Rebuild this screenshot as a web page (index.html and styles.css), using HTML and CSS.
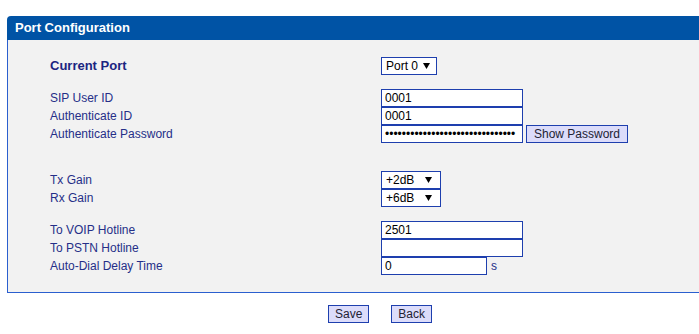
FILE: index.html
```html
<!DOCTYPE html>
<html>
<head>
<meta charset="utf-8">
<link rel="stylesheet" href="styles.css">
</head>
<body>
<div class="page">
  <div class="panel">
    <div class="panel-head">Port Configuration</div>
    <div class="panel-body">
      <div class="group">
        <div class="label strong">Current Port</div>
        <div class="ctrl">
          <select class="sel sel-port"><option>Port 0</option></select>
        </div>
      </div>
      <div class="group">
        <div class="label">SIP User ID</div>
        <div class="ctrl"><input class="txt" type="text" value="0001"></div>
        <div class="label">Authenticate ID</div>
        <div class="ctrl"><input class="txt" type="text" value="0001"></div>
        <div class="label">Authenticate Password</div>
        <div class="ctrl">
          <input class="txt" type="password" value="aaaaaaaaaaaaaaaaaaaaaaaaaaaaaaa">
          <button class="btn">Show Password</button>
        </div>
      </div>
      <div class="group group-wide">
        <div class="label">Tx Gain</div>
        <div class="ctrl"><select class="sel sel-gain"><option>+2dB</option></select></div>
        <div class="label">Rx Gain</div>
        <div class="ctrl"><select class="sel sel-gain"><option>+6dB</option></select></div>
      </div>
      <div class="group">
        <div class="label">To VOIP Hotline</div>
        <div class="ctrl"><input class="txt" type="text" value="2501"></div>
        <div class="label">To PSTN Hotline</div>
        <div class="ctrl"><input class="txt" type="text" value=""></div>
        <div class="label">Auto-Dial Delay Time</div>
        <div class="ctrl">
          <input class="txt txt-short" type="text" value="0">
          <span class="unit">s</span>
        </div>
      </div>
    </div>
  </div>
  <div class="actions">
    <button class="btn">Save</button>
    <button class="btn">Back</button>
  </div>
</div>
</body>
</html>
```

FILE: styles.css
```css
html, body {
  margin: 0;
  padding: 0;
  background: #ffffff;
  overflow: hidden;
}

body {
  font-family: "Liberation Sans", Arial, sans-serif;
  font-size: 12px;
}

.page {
  padding: 16px 0 0 7px;
}

.panel-head {
  height: 24px;
  line-height: 24px;
  background: #0053a5;
  color: #ffffff;
  font-weight: bold;
  font-size: 13px;
  padding-left: 8px;
  border-top-left-radius: 4px;
}

.panel-body {
  background: #f2f2f2;
  border-left: 1px solid #2a5fcf;
  border-bottom: 1px solid #2a5fcf;
  padding: 17px 0 17px 42px;
}

.group {
  display: grid;
  grid-template-columns: 331px auto;
  grid-auto-rows: 18px;
  margin-top: 14px;
}

.group:first-child {
  margin-top: 0;
}

.group-wide {
  margin-top: 28px;
}

.label {
  display: flex;
  align-items: center;
  color: #252f88;
  font-size: 12px;
  white-space: nowrap;
}

.label.strong {
  font-weight: bold;
  font-size: 13px;
  color: #1b2581;
  padding-bottom: 1px;
}

.ctrl {
  display: flex;
  align-items: center;
  gap: 3px;
}

.txt {
  box-sizing: border-box;
  width: 142px;
  height: 18px;
  margin: 0;
  border: 1px solid #1e3fae;
  background: #ffffff;
  padding: 0 3px;
  font-family: "Liberation Sans", Arial, sans-serif;
  font-size: 12px;
  color: #000000;
  outline: none;
}

.txt-short {
  width: 106px;
}

.unit {
  color: #252f88;
  margin-left: 1px;
}

.sel {
  -webkit-appearance: none;
  appearance: none;
  box-sizing: border-box;
  height: 18px;
  margin: 0;
  border: 1px solid #1e3fae;
  border-radius: 0;
  background-color: #ffffff;
  background-image: url("data:image/svg+xml;utf8,<svg xmlns='http://www.w3.org/2000/svg' width='7' height='6'><path d='M0 0H7L3.5 6Z' fill='%23000'/></svg>");
  background-repeat: no-repeat;
  background-size: 7px 6px;
  padding: 0 0 0 4px;
  font-family: "Liberation Sans", Arial, sans-serif;
  font-size: 12px;
  color: #000000;
  outline: none;
}

.sel-port {
  width: 56px;
  background-position: right 6px center;
}

.sel-gain {
  width: 60px;
  background-position: right 8px center;
}

.btn {
  box-sizing: border-box;
  height: 18px;
  margin: 0;
  padding: 0 6px;
  border: 1px solid #1e3fae;
  border-radius: 0;
  background: #dcdcfa;
  color: #222233;
  font-family: "Liberation Sans", Arial, sans-serif;
  font-size: 12px;
  line-height: 16px;
}

.ctrl .btn {
  padding: 0 7px;
}

.actions {
  display: flex;
  gap: 22px;
  margin-top: 12px;
  padding-left: 321px;
}
```
